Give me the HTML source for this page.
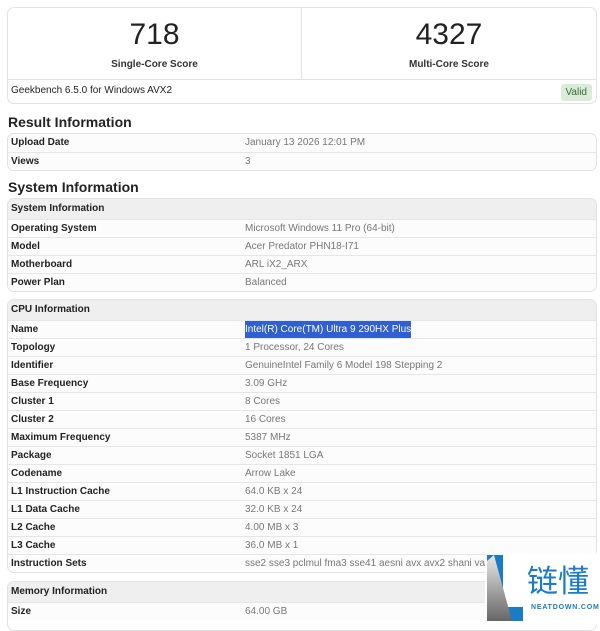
<!DOCTYPE html>
<html><head><meta charset="utf-8"><style>
*{box-sizing:border-box;margin:0;padding:0}
body{width:600px;height:624px;background:#fff;font-family:"Liberation Sans",sans-serif;position:relative;overflow:hidden;color:#222}
.card{position:absolute;left:7px;width:590px;border:1px solid #e2e2e2;border-radius:7px;background:#fff;overflow:hidden}
.sc{position:absolute;top:0;width:50%;height:71px;text-align:center}
.sc .n{font-size:30px;color:#222;margin-top:11px;line-height:32px}
.sc .l{font-size:10px;font-weight:bold;margin-top:8px;color:#333}
h2{position:absolute;left:8px;font-size:14px;font-weight:bold;color:#222}
.row{height:18px;border-top:1px solid #e6e6e6;font-size:10px;line-height:17px;position:relative;background:#fcfcfc}
.row:first-child{border-top:none}
.row b{position:absolute;left:3px;color:#222}
.row span{position:absolute;left:237px;color:#777}
.hd{height:20px;background:#efefef;font-size:10px;font-weight:bold;line-height:20px;padding-left:3px}
.sel{background:#2f5fd0;color:#fff!important}
</style></head><body>
<div class="card" style="top:7px;height:97px">
 <div class="sc" style="left:0;border-right:1px solid #e2e2e2"><div class="n">718</div><div class="l">Single-Core Score</div></div>
 <div class="sc" style="left:50%"><div class="n">4327</div><div class="l">Multi-Core Score</div></div>
 <div style="position:absolute;top:71px;left:0;right:0;border-top:1px solid #e2e2e2;height:26px;font-size:10px;padding:5px 3px">Geekbench 6.5.0 for Windows AVX2</div>
 <div style="position:absolute;right:4px;top:76px;background:#d8ecd8;color:#3a6a3a;font-size:10px;padding:3px 5px;border-radius:3px">Valid</div>
</div>
<h2 style="top:114px">Result Information</h2>
<div class="card" style="top:133px">
 <div class="row"><b>Upload Date</b><span>January 13 2026 12:01 PM</span></div>
 <div class="row"><b>Views</b><span>3</span></div>
</div>
<h2 style="top:179px">System Information</h2>
<div class="card" style="top:198px">
 <div class="hd">System Information</div>
 <div class="row"><b>Operating System</b><span>Microsoft Windows 11 Pro (64-bit)</span></div>
 <div class="row"><b>Model</b><span>Acer Predator PHN18-I71</span></div>
 <div class="row"><b>Motherboard</b><span>ARL iX2_ARX</span></div>
 <div class="row"><b>Power Plan</b><span>Balanced</span></div>
</div>
<div class="card" style="top:299px">
 <div class="hd">CPU Information</div>
 <div class="row"><b>Name</b><span class="sel">Intel(R) Core(TM) Ultra 9 290HX Plus</span></div>
 <div class="row"><b>Topology</b><span>1 Processor, 24 Cores</span></div>
 <div class="row"><b>Identifier</b><span>GenuineIntel Family 6 Model 198 Stepping 2</span></div>
 <div class="row"><b>Base Frequency</b><span>3.09 GHz</span></div>
 <div class="row"><b>Cluster 1</b><span>8 Cores</span></div>
 <div class="row"><b>Cluster 2</b><span>16 Cores</span></div>
 <div class="row"><b>Maximum Frequency</b><span>5387 MHz</span></div>
 <div class="row"><b>Package</b><span>Socket 1851 LGA</span></div>
 <div class="row"><b>Codename</b><span>Arrow Lake</span></div>
 <div class="row"><b>L1 Instruction Cache</b><span>64.0 KB x 24</span></div>
 <div class="row"><b>L1 Data Cache</b><span>32.0 KB x 24</span></div>
 <div class="row"><b>L2 Cache</b><span>4.00 MB x 3</span></div>
 <div class="row"><b>L3 Cache</b><span>36.0 MB x 1</span></div>
 <div class="row"><b>Instruction Sets</b><span style="white-space:nowrap">sse2 sse3 pclmul fma3 sse41 aesni avx avx2 shani vaes</span></div>
</div>
<div class="card" style="top:581px;height:50px">
 <div class="hd">Memory Information</div>
 <div class="row"><b>Size</b><span>64.00 GB</span></div>
</div>
<div style="position:absolute;left:485px;top:553px;width:115px;height:71px;background:#fff">
 <svg width="115" height="71" style="position:absolute;left:0;top:0">
  <defs><linearGradient id="g" x1="0" y1="0" x2="0" y2="1"><stop offset="0" stop-color="#e8e8e8"/><stop offset="1" stop-color="#666"/></linearGradient></defs>
  <polygon points="2,2 18,2 18,54 38,54 38,68 2,68" fill="#1a7cc8"/>
  <polygon points="2,8 9,2 27,68 2,68" fill="url(#g)"/>
 </svg>
 <div style="position:absolute;left:42px;top:9px;font-family:'Noto Sans CJK SC',sans-serif;font-size:31px;line-height:34px;color:#1a7cc8">链懂</div>
 <div style="position:absolute;left:46px;top:51px;font-size:7px;font-weight:bold;color:#1a7cc8;letter-spacing:0.8px">NEATDOWN.COM</div>
</div>
</body></html>
